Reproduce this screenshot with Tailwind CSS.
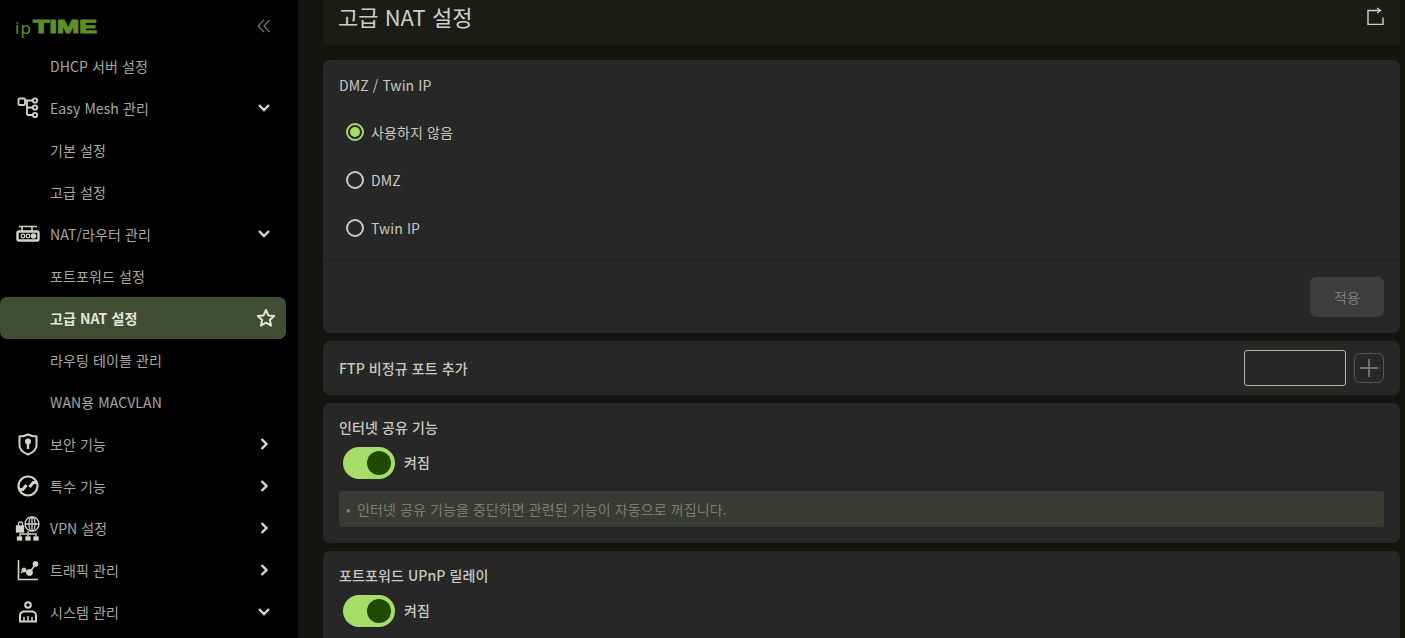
<!doctype html>
<html lang="ko">
<head>
<meta charset="utf-8">
<title>고급 NAT 설정</title>
<script src="https://cdn.jsdelivr.net/npm/@tailwindcss/browser@4"></script>
</head>
<body class="bg-[#14150f] font-['Noto_Sans_CJK_KR','Noto_Sans',sans-serif] tracking-[0.1px] overflow-hidden">
<div class="flex h-[638px] w-[1405px] overflow-hidden">

  <!-- sidebar -->
  <aside class="w-[298px] shrink-0 bg-black text-[14px] text-[#a9a99f] pr-[12px]">
    <div class="h-[45px] flex items-center justify-between pl-[15px] pr-[14px]">
      <div class="flex items-center text-[#5f8f22] leading-none pt-[10px]">
        <span class="text-[17px] tracking-[1px] w-[18px] font-['Noto_Sans']">ip</span>
        <span class="text-[19px] font-black font-['Liberation_Sans'] [-webkit-text-stroke:1.200px_#5f8f22] inline-block w-[63px] origin-left scale-x-[1.4] -mt-[2px]">TIME</span>
      </div>
      <svg class="w-[14px] h-[14px] text-[#7f7f78] mt-[7px] mr-[1px]" viewBox="0 0 16 16" fill="none" stroke="currentColor" stroke-width="1.300"><path d="M8 1 1.500 8 8 15M14.500 1 8 8l6.500 7"/></svg>
    </div>

    <a class="h-[42px] flex items-center pl-[50px]">DHCP 서버 설정</a>

    <a class="h-[42px] flex items-center">
      <span class="w-[50px] flex justify-center pl-[6px]">
        <svg class="w-[22px] h-[22px] text-[#d3d3c9]" viewBox="0 0 22 22" fill="none" stroke="currentColor" stroke-width="1.800"><rect x="1.500" y="1.500" width="6.500" height="6.500" rx="1"/><path d="M8 3.500h8M10 3.500V18M10 10.500h6M10 18h6"/><circle cx="18" cy="3.500" r="2.200"/><circle cx="18" cy="10.500" r="2.200"/><circle cx="18" cy="18" r="2.200"/></svg>
      </span>
      <span class="flex-1">Easy Mesh 관리</span>
      <svg class="w-[14px] h-[14px] mr-[15px] text-[#d8d8d0]" viewBox="0 0 14 14" fill="none" stroke="currentColor" stroke-width="2.400"><path d="m2 4 5 5 5-5"/></svg>
    </a>
    <a class="h-[42px] flex items-center pl-[50px]">기본 설정</a>
    <a class="h-[42px] flex items-center pl-[50px]">고급 설정</a>

    <a class="h-[42px] flex items-center">
      <span class="w-[50px] flex justify-center pl-[6px]">
        <svg class="w-[24px] h-[20px] text-[#d3d3c9]" viewBox="0 0 24 20" fill="none" stroke="currentColor" stroke-width="1.600"><path d="M3 2.500h18M6 2.500V7M16 2.500V7"/><rect x="1.500" y="7.500" width="21" height="9" rx="1.500" stroke-width="2.400"/><circle cx="7" cy="12" r="1.800" stroke-width="1.300"/><circle cx="12" cy="12" r="1.800" stroke-width="1.300"/><circle cx="17.500" cy="12" r="2" fill="currentColor"/></svg>
      </span>
      <span class="flex-1">NAT/라우터 관리</span>
      <svg class="w-[14px] h-[14px] mr-[15px] text-[#d8d8d0]" viewBox="0 0 14 14" fill="none" stroke="currentColor" stroke-width="2.400"><path d="m2 4 5 5 5-5"/></svg>
    </a>
    <a class="h-[42px] flex items-center pl-[50px]">포트포워드 설정</a>
    <a class="h-[42px] flex items-center pl-[50px] pr-[10px] bg-[#3f4d33] rounded-[7px] text-[#e6e6da] font-semibold justify-between">
      <span>고급 NAT 설정</span>
      <svg class="w-[20px] h-[20px] text-[#e6e6da]" viewBox="0 0 20 20" fill="none" stroke="currentColor" stroke-width="2" stroke-linejoin="round"><path d="m10 2 2.400 5.400 5.800.6-4.400 3.900 1.300 5.700L10 14.700l-5.100 2.900 1.300-5.700L1.800 8l5.800-.6z"/></svg>
    </a>
    <a class="h-[42px] flex items-center pl-[50px]">라우팅 테이블 관리</a>
    <a class="h-[42px] flex items-center pl-[50px]">WAN용 MACVLAN</a>

    <a class="h-[42px] flex items-center">
      <span class="w-[50px] flex justify-center pl-[6px]">
        <svg class="w-[20px] h-[23px] text-[#d3d3c9]" viewBox="0 0 20 23" fill="none"><path d="M10 1.500c3 1.500 5.500 2 8.500 2v9c0 4-3.500 7-8.500 9-5-2-8.500-5-8.500-9v-9c3 0 5.500-.5 8.500-2Z" stroke="currentColor" stroke-width="2"/><circle cx="10" cy="8.500" r="3" fill="currentColor"/><path d="M10 9v7" stroke="currentColor" stroke-width="2.400"/></svg>
      </span>
      <span class="flex-1">보안 기능</span>
      <svg class="w-[14px] h-[14px] mr-[15px] text-[#d8d8d0]" viewBox="0 0 14 14" fill="none" stroke="currentColor" stroke-width="2.400"><path d="m4.500 2 5 5-5 5"/></svg>
    </a>
    <a class="h-[42px] flex items-center">
      <span class="w-[50px] flex justify-center pl-[6px]">
        <svg class="w-[22px] h-[22px] text-[#d3d3c9]" viewBox="0 0 22 22" fill="none" stroke="currentColor" stroke-width="2.200"><circle cx="11" cy="11" r="9.500"/><path d="M2.500 14.500h3.300L9.500 10M19.500 7.500h-3.300L12.500 12" stroke-width="3"/></svg>
      </span>
      <span class="flex-1">특수 기능</span>
      <svg class="w-[14px] h-[14px] mr-[15px] text-[#d8d8d0]" viewBox="0 0 14 14" fill="none" stroke="currentColor" stroke-width="2.400"><path d="m4.500 2 5 5-5 5"/></svg>
    </a>
    <a class="h-[42px] flex items-center">
      <span class="w-[50px] flex justify-center pl-[6px]">
        <svg class="w-[26px] h-[25px] text-[#d3d3c9]" viewBox="0 0 26 25" fill="none" stroke="currentColor" stroke-width="1.300"><circle cx="17" cy="8" r="7"/><ellipse cx="17" cy="8" rx="3" ry="7"/><path d="M10 8h14M17 1v14M5 21.500V18h16v3.500M13 15v6.500"/><path d="M3.500 10V8a2 2 0 0 1 4 0v2"/><rect x="1.500" y="10" width="7" height="6" fill="currentColor"/><rect x="2.500" y="21" width="4" height="3" fill="currentColor"/><rect x="11" y="21" width="4" height="3" fill="currentColor"/><rect x="19" y="21" width="4" height="3" fill="currentColor"/></svg>
      </span>
      <span class="flex-1">VPN 설정</span>
      <svg class="w-[14px] h-[14px] mr-[15px] text-[#d8d8d0]" viewBox="0 0 14 14" fill="none" stroke="currentColor" stroke-width="2.400"><path d="m4.500 2 5 5-5 5"/></svg>
    </a>
    <a class="h-[42px] flex items-center">
      <span class="w-[50px] flex justify-center pl-[6px]">
        <svg class="w-[22px] h-[22px] text-[#d3d3c9]" viewBox="0 0 22 22" fill="none" stroke="currentColor"><path d="M1.500 1v19.500H21" stroke-width="1.600"/><path d="m4 14 3-3 5 3.500 7-10" stroke-width="1.600"/><circle cx="7" cy="11" r="2" fill="currentColor"/><circle cx="12.500" cy="13.500" r="3" fill="currentColor"/><circle cx="18.500" cy="5" r="2.500" fill="currentColor"/></svg>
      </span>
      <span class="flex-1">트래픽 관리</span>
      <svg class="w-[14px] h-[14px] mr-[15px] text-[#d8d8d0]" viewBox="0 0 14 14" fill="none" stroke="currentColor" stroke-width="2.400"><path d="m4.500 2 5 5-5 5"/></svg>
    </a>
    <a class="h-[42px] flex items-center">
      <span class="w-[50px] flex justify-center pl-[6px]">
        <svg class="w-[20px] h-[22px] text-[#d3d3c9]" viewBox="0 0 20 22" fill="none" stroke="currentColor" stroke-width="2"><circle cx="10" cy="4" r="2.800"/><path d="M2 20.500v-6a4 4 0 0 1 4-4h8a4 4 0 0 1 4 4v6Z"/><path d="M6 20v-4M10 20v-5M14 20v-4" stroke-width="1.500"/></svg>
      </span>
      <span class="flex-1">시스템 관리</span>
      <svg class="w-[14px] h-[14px] mr-[15px] text-[#d8d8d0]" viewBox="0 0 14 14" fill="none" stroke="currentColor" stroke-width="2.400"><path d="m2 4 5 5 5-5"/></svg>
    </a>
  </aside>

  <!-- main -->
  <main class="w-[1077px] ml-[25px] shrink-0 text-[14px] text-[#c9c9c0]">
    <header class="h-[45px] bg-[#1b1c18] flex items-center justify-between pl-[15px] pr-[15px] mb-[15px]">
      <h1 class="text-[22px] text-[#cfcfc6] -mt-[12px] tracking-normal">고급 NAT 설정</h1>
      <svg class="w-[18px] h-[19px] -mt-[15px] text-[#d0d0c8]" viewBox="0 0 18 19" fill="none" stroke="currentColor" stroke-width="1.400"><path d="M13 4.500H1v14h15v-7"/><path d="M10 2l3.500 2.500L10 7"/></svg>
    </header>

    <section class="bg-[#272727] rounded-[7px] h-[273px] mb-[8px]">
      <div class="h-[201px] pl-[16px] pt-[15px] border-b border-[#1f1f1f]">
        <h2 class="h-[20px] leading-[20px]">DMZ / Twin IP</h2>
        <div class="pt-[13px]">
          <label class="h-[48px] flex items-center pl-[7px] gap-[7px]">
            <span class="w-[18px] h-[18px] rounded-full border-2 border-[#a6dd68] flex items-center justify-center"><span class="w-[10px] h-[10px] rounded-full bg-[#a6dd68]"></span></span>
            사용하지 않음
          </label>
          <label class="h-[48px] flex items-center pl-[7px] gap-[7px]">
            <span class="w-[18px] h-[18px] rounded-full border-2 border-[#c9c9c0]"></span>
            DMZ
          </label>
          <label class="h-[48px] flex items-center pl-[7px] gap-[7px]">
            <span class="w-[18px] h-[18px] rounded-full border-2 border-[#c9c9c0]"></span>
            Twin IP
          </label>
        </div>
      </div>
      <div class="flex justify-end pt-[16px] pr-[16px]">
        <button class="w-[74px] h-[40px] rounded-[6px] bg-[#3d3d3d] text-[#7c7c78] text-[14px]">적용</button>
      </div>
    </section>

    <section class="bg-[#272727] rounded-[7px] h-[54px] mb-[8px] flex items-center justify-between pl-[16px] pr-[16px]">
      <h2 class="font-medium">FTP 비정규 포트 추가</h2>
      <div class="flex items-center gap-[8px]">
        <input class="w-[102px] h-[36px] rounded-[3px] border border-[#b4b4ac] bg-transparent" type="text">
        <button class="w-[30px] h-[30px] rounded-[6px] border border-[#55554f] flex items-center justify-center">
          <svg class="w-[18px] h-[18px] text-[#6f6f6a]" viewBox="0 0 18 18" fill="none" stroke="currentColor" stroke-width="2"><path d="M9 0v18M0 9h18"/></svg>
        </button>
      </div>
    </section>

    <section class="bg-[#272727] rounded-[7px] h-[140px] mb-[8px] pl-[16px] pr-[16px] pt-[14px]">
      <h2 class="h-[20px] leading-[20px] font-medium">인터넷 공유 기능</h2>
      <div class="flex items-center h-[32px] mt-[10px] gap-[9px]">
        <span class="w-[52px] h-[32px] rounded-full bg-[#a6dd68] flex items-center justify-end pr-[4px] ml-[4px]"><span class="w-[24px] h-[24px] rounded-full bg-[#214a00]"></span></span>
        <span class="font-medium pb-[2px]">켜짐</span>
      </div>
      <p class="h-[36px] mt-[12px] bg-[#383b33] rounded-[3px] flex items-center pl-[7px] text-[#7b7f6f] text-[14px]"><span class="w-[11px] text-[14px]">•</span>인터넷 공유 기능을 중단하면 관련된 기능이 자동으로 꺼집니다.</p>
    </section>

    <section class="bg-[#272727] rounded-[7px] h-[140px] pl-[16px] pr-[16px] pt-[14px]">
      <h2 class="h-[20px] leading-[20px] font-medium">포트포워드 UPnP 릴레이</h2>
      <div class="flex items-center h-[32px] mt-[10px] gap-[9px]">
        <span class="w-[52px] h-[32px] rounded-full bg-[#a6dd68] flex items-center justify-end pr-[4px] ml-[4px]"><span class="w-[24px] h-[24px] rounded-full bg-[#214a00]"></span></span>
        <span class="font-medium pb-[2px]">켜짐</span>
      </div>
    </section>
  </main>
</div>
</body>
</html>
